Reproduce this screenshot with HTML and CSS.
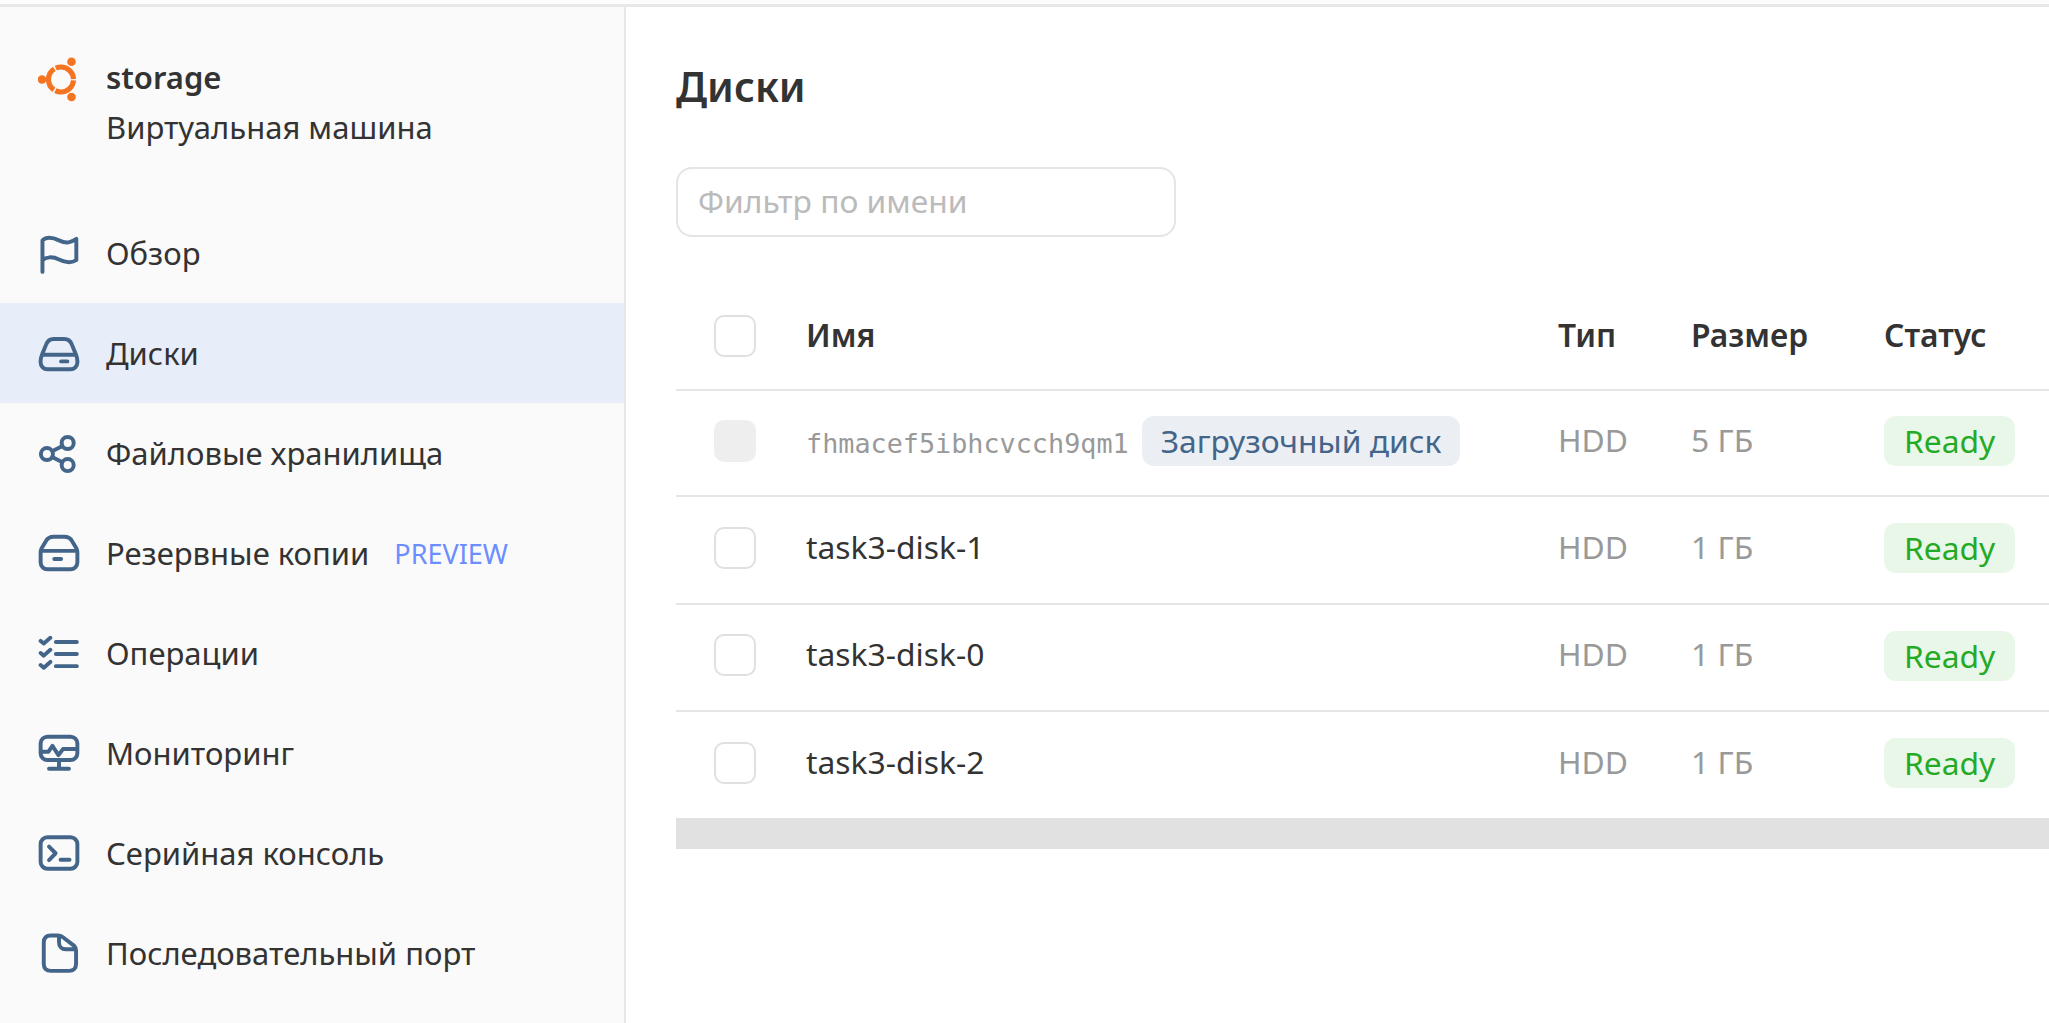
FILE: index.html
```html
<!DOCTYPE html>
<html lang="ru">
<head>
    <meta charset="UTF-8">
    <title>Диски</title>
    <link rel="stylesheet" href="styles.css">
</head>
<body>
    <div class="topbar"></div>
    <div class="layout">
        <aside class="sidebar">
            <div class="vm-head">
                <svg class="os-logo" viewBox="0 0 43 46" fill="none">
                    <circle cx="23" cy="22.500" r="12.500" stroke="#f47421" stroke-width="5.200" stroke-dasharray="24.500 1.680" stroke-dashoffset="-0.840"/>
                    <circle cx="4" cy="22.500" r="4.300" fill="#f47421"/>
                    <circle cx="33.500" cy="4.700" r="4.300" fill="#f47421"/>
                    <circle cx="33.500" cy="40" r="4.300" fill="#f47421"/>
                </svg>
                <div class="vm-text">
                    <div class="vm-name">storage</div>
                    <div class="vm-type">Виртуальная машина</div>
                </div>
            </div>
            <nav class="nav">
                <a class="nav-item">
                    <svg class="nav-icon" viewBox="0 0 16 16"><path d="M1.700 15.200V3.200C3 2 5 1.800 8 3.200s4.500 .8 6.600-.6v8.100c-2.100 1.300-4.100 1.100-6.600-.2s-5-1-6.300 .2"/></svg>
                    <span>Обзор</span>
                </a>
                <a class="nav-item active">
                    <svg class="nav-icon" viewBox="0 0 16 16"><path d="M1 11c0-1 .2-1.600 .6-2.500L3 5c.6-1.700 1.500-2.300 3-2.300h4c1.500 0 2.400 .6 3 2.300l1.400 3.500c.4 .9 .6 1.500 .6 2.500v.6a2.600 2.600 0 0 1-2.600 2.600H3.600A2.600 2.600 0 0 1 1 11.600Z"/><path d="M1.600 8.700H14.400M8.800 11.200h2.400"/></svg>
                    <span>Диски</span>
                </a>
                <a class="nav-item">
                    <svg class="nav-icon" viewBox="0 0 16 16"><circle cx="3.400" cy="8.400" r="2.300"/><circle cx="11.300" cy="4.200" r="2.300"/><circle cx="11.300" cy="12.600" r="2.300"/><path d="M5.400 7.300 9.300 5.300M5.400 9.500l3.900 2"/></svg>
                    <span>Файловые хранилища</span>
                </a>
                <a class="nav-item">
                    <svg class="nav-icon" viewBox="0 0 16 16"><path d="M1 7.500c0-.6 .2-1 .5-1.500L3 3.500C3.600 2.300 4.500 1.800 6 1.800h4c1.500 0 2.400 .5 3 1.700L14.500 6c.3 .5 .5 .9 .5 1.500v4.100a2.600 2.600 0 0 1-2.600 2.600H3.600A2.600 2.600 0 0 1 1 11.600Z"/><path d="M1.400 7.200H14.600M6.200 10.300h2.600"/></svg>
                    <span>Резервные копии</span>
                    <span class="preview">PREVIEW</span>
                </a>
                <a class="nav-item">
                    <svg class="nav-icon" viewBox="0 0 16 16"><path d="M1 3.400 2.200 4.400 4.700 2.200M1 8l1.200 1 2.500-2.200M1 12.600l1.200 1 2.500-2.200M6.800 3.800H14.800M6.800 8.400H14.800M6.800 13H14.800"/></svg>
                    <span>Операции</span>
                </a>
                <a class="nav-item">
                    <svg class="nav-icon" viewBox="0 0 16 16"><rect x="1" y="1.800" width="14" height="8.900" rx="2.600"/><path d="M1.500 7.500H4L5.500 5.300 7.800 8.800 9.500 6.500H14.500M8 10.700V14M4.200 14H11.800"/></svg>
                    <span>Мониторинг</span>
                </a>
                <a class="nav-item">
                    <svg class="nav-icon" viewBox="0 0 16 16"><rect x="1" y="2" width="14" height="12" rx="2.600"/><path d="M4.200 5.600 6.700 8.100 4.200 10.700M8.600 10.600h3.400"/></svg>
                    <span>Серийная консоль</span>
                </a>
                <a class="nav-item">
                    <svg class="nav-icon" viewBox="0 0 16 16"><path d="M7.500 1.300H4.800C3.200 1.300 2.200 2.300 2.200 3.900v8.300c0 1.600 1 2.600 2.600 2.600h7.100c1.600 0 2.600-1 2.600-2.600V7c0-.7-.2-1.200-.7-1.700L9.500 2c-.6-.5-1.200-.7-2-.7ZM8 1.400V4c0 1.500 1 2.600 2.600 2.600h3.800"/></svg>
                    <span>Последовательный порт</span>
                </a>
            </nav>
        </aside>
        <main class="content">
            <h1 class="page-title">Диски</h1>
            <input class="filter" type="text" placeholder="Фильтр по имени">
            <div class="table-wrap">
                <table class="disks">
                    <thead>
                        <tr>
                            <th class="col-check"><span class="check"></span></th>
                            <th class="col-name">Имя</th>
                            <th class="col-type">Тип</th>
                            <th class="col-size">Размер</th>
                            <th class="col-status">Статус</th>
                        </tr>
                    </thead>
                    <tbody>
                        <tr class="boot-row">
                            <td><span class="check disabled"></span></td>
                            <td><span class="disk-id">fhmacef5ibhcvcch9qm1</span><span class="boot-tag">Загрузочный диск</span></td>
                            <td class="muted">HDD</td>
                            <td class="muted">5 ГБ</td>
                            <td><span class="status">Ready</span></td>
                        </tr>
                        <tr class="tall-row">
                            <td><span class="check"></span></td>
                            <td>task3-disk-1</td>
                            <td class="muted">HDD</td>
                            <td class="muted">1 ГБ</td>
                            <td><span class="status">Ready</span></td>
                        </tr>
                        <tr>
                            <td><span class="check"></span></td>
                            <td>task3-disk-0</td>
                            <td class="muted">HDD</td>
                            <td class="muted">1 ГБ</td>
                            <td><span class="status">Ready</span></td>
                        </tr>
                        <tr>
                            <td><span class="check"></span></td>
                            <td>task3-disk-2</td>
                            <td class="muted">HDD</td>
                            <td class="muted">1 ГБ</td>
                            <td><span class="status">Ready</span></td>
                        </tr>
                    </tbody>
                </table>
            </div>
            <div class="scrollbar"></div>
        </main>
    </div>
</body>
</html>
```

FILE: styles.css
```css
* {
    box-sizing: border-box;
}

html, body {
    height: 100%;
}

body {
    display: flex;
    flex-direction: column;
    margin: 0;
    overflow: hidden;
    background: #fff;
    color: #333;
    font-family: "Noto Sans", Arial, sans-serif;
    font-size: 31.800px;
}

.topbar {
    flex: none;
    height: 7px;
    background: #fdfdfd;
    border-bottom: 3px solid #e8e8e8;
}

.layout {
    display: flex;
    flex: 1;
    min-height: 0;
}

.sidebar {
    flex: 0 0 626px;
    background: #fafafa;
    border-right: 2px solid #e8e8e8;
    font-size: 31px;
}

.vm-head {
    display: flex;
    gap: 25px;
    padding: 50px 0 0 38px;
    height: 196px;
}

.os-logo {
    width: 43px;
    height: 46px;
    flex: none;
}

.vm-name {
    font-weight: 600;
    line-height: 40px;
}

.vm-type {
    margin-top: 10px;
    line-height: 40px;
}

.nav-item {
    display: flex;
    align-items: center;
    height: 100px;
    padding-left: 38px;
}

.nav-item.active {
    background: #e7edf9;
}

.nav-icon {
    flex: none;
    width: 42px;
    height: 42px;
    margin-right: 26px;
    fill: none;
    stroke: #44658a;
    stroke-width: 1.500;
    stroke-linecap: round;
    stroke-linejoin: round;
}

.preview {
    margin-left: 25px;
    color: #6c8dff;
    font-size: 27px;
}

.content {
    flex: 1;
    min-width: 0;
    padding: 0 0 0 50px;
    overflow: hidden;
}

.page-title {
    margin: 49px 0 0;
    font-size: 41px;
    font-weight: 600;
    line-height: 60px;
}

.filter {
    display: block;
    width: 500px;
    height: 70px;
    margin-top: 51px;
    padding: 0 0 3px 20px;
    border: 2px solid #e5e5e5;
    border-radius: 16px;
    outline: none;
    font: inherit;
}

.filter::placeholder {
    color: #bbb;
}

.table-wrap {
    margin-top: 47px;
    overflow: hidden;
}

.disks {
    width: 1480px;
    table-layout: fixed;
    border-collapse: collapse;
}

.disks th {
    height: 106px;
    padding: 0 0 4px;
    text-align: left;
    font-weight: 600;
}

.disks td {
    height: 107px;
    padding: 0 0 8px;
}

.disks .boot-row td {
    height: 106px;
}

.disks .tall-row td {
    height: 108px;
}

.disks tr {
    border-bottom: 2px solid #e5e5e5;
}

.disks tbody tr:last-child {
    border-bottom: none;
}

.col-check {
    width: 130px;
}

.col-name {
    width: 752px;
}

.col-type {
    width: 133px;
}

.col-size {
    width: 193px;
}

.check {
    display: block;
    width: 42px;
    height: 42px;
    margin: 3px 0 0 38px;
    border: 2px solid #e0e0e0;
    border-radius: 10px;
    background: #fff;
}

.check.disabled {
    border: none;
    background: #eee;
}

.disk-id {
    font-family: "DejaVu Sans Mono", monospace;
    font-size: 26.800px;
    color: #999;
}

.boot-tag {
    display: inline-block;
    margin: 4px 0 0 13px;
    padding: 0 19px;
    line-height: 50px;
    border-radius: 12px;
    background: #ebeff3;
    color: #44658a;
}

.muted {
    color: #999;
}

.status {
    display: inline-block;
    margin-top: 4px;
    padding: 0 20px;
    line-height: 50px;
    border-radius: 12px;
    background: #e9f7e9;
    color: #25aa25;
}

.scrollbar {
    height: 31px;
    background: #e1e1e1;
}
```
